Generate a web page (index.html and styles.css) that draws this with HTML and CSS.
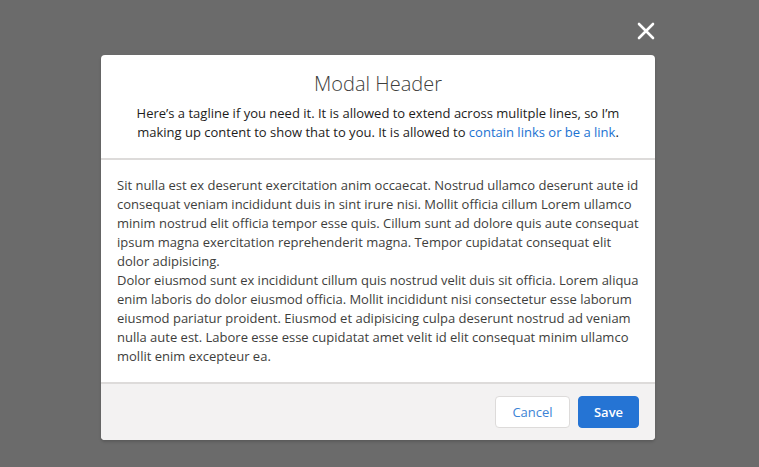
FILE: index.html
```html
<!DOCTYPE html>
<html lang="en">
<head>
<meta charset="utf-8">
<title>Modal</title>
<link rel="stylesheet" href="styles.css">
</head>
<body>
<div class="backdrop">
  <section class="modal" role="dialog" aria-labelledby="modal-heading">
    <button class="close" title="Close" aria-label="Close">
      <svg viewBox="0 0 18 18" width="18" height="18" aria-hidden="true">
        <path d="M2 2 L16 16 M16 2 L2 16" stroke="#fff" stroke-width="2.6" stroke-linecap="round" fill="none"/>
      </svg>
    </button>
    <header class="modal-header">
      <h2 id="modal-heading" class="modal-title">Modal Header</h2>
      <p class="tagline">Here’s a tagline if you need it. It is allowed to extend across mulitple lines, so I’m making up content to show that to you. It is allowed to <a href="#">contain links or be a link</a>.</p>
    </header>
    <div class="modal-body">
      <p>Sit nulla est ex deserunt exercitation anim occaecat. Nostrud ullamco deserunt aute id consequat veniam incididunt duis in sint irure nisi. Mollit officia cillum Lorem ullamco minim nostrud elit officia tempor esse quis. Cillum sunt ad dolore quis aute consequat ipsum magna exercitation reprehenderit magna. Tempor cupidatat consequat elit dolor adipisicing.</p>
      <p>Dolor eiusmod sunt ex incididunt cillum quis nostrud velit duis sit officia. Lorem aliqua enim laboris do dolor eiusmod officia. Mollit incididunt nisi consectetur esse laborum eiusmod pariatur proident. Eiusmod et adipisicing culpa deserunt nostrud ad veniam nulla aute est. Labore esse esse cupidatat amet velit id elit consequat minim ullamco mollit enim excepteur ea.</p>
    </div>
    <footer class="modal-footer">
      <button class="btn btn-neutral">Cancel</button>
      <button class="btn btn-brand">Save</button>
    </footer>
  </section>
</div>
</body>
</html>
```
FILE: styles.css
```css
* { box-sizing: border-box; }
html, body {
  margin: 0;
  height: 100%;
}
body {
  font-family: "Open Sans", "Noto Sans", sans-serif;
  font-size: 13px;
  line-height: 19px;
  color: #3e3e3c;
}
.backdrop {
  width: 759px;
  height: 467px;
  background: #6b6b6b;
  display: flex;
  justify-content: flex-start;
  padding: 55px 0 0 101px;
}
.modal {
  position: relative;
  width: 554px;
  height: 385px;
  background: #fff;
  border-radius: 4px;
  display: flex;
  flex-direction: column;
  box-shadow: 0 2px 3px rgba(0,0,0,0.16);
}
.close {
  position: absolute;
  top: -34px;
  right: -1px;
  width: 20px;
  height: 20px;
  padding: 0;
  border: 0;
  background: transparent;
  display: flex;
  align-items: center;
  justify-content: center;
  cursor: pointer;
}
.modal-header {
  padding: 16px;
  text-align: center;
  border-bottom: 2px solid #dddbda;
}
.modal-title {
  margin: 0;
  font-size: 20px;
  line-height: 25px;
  font-weight: 300;
  color: #3e3e3c;
}
.tagline {
  margin: 8px 0 0;
  color: #1e1c1b;
}
.tagline a {
  color: #1b72d2;
  text-decoration: none;
}
.modal-body {
  flex: 1;
  padding: 16px;
  color: #3e3e3c;
}
.modal-body p { margin: 0; }
.modal-footer {
  background: #f3f2f2;
  border-top: 2px solid #dddbda;
  padding: 12px 16px;
  display: flex;
  justify-content: flex-end;
  gap: 8px;
  border-radius: 0 0 4px 4px;
}
.btn {
  height: 32px;
  border-radius: 4px;
  font-family: inherit;
  font-size: 13px;
  padding: 0;
  cursor: pointer;
}
.btn-neutral {
  width: 75px;
  background: #fff;
  border: 1px solid #dddbda;
  color: #3c83d5;
}
.btn-brand {
  width: 61px;
  background: #2574d4;
  border: 1px solid #2574d4;
  color: #fff;
  font-weight: 600;
}
```
